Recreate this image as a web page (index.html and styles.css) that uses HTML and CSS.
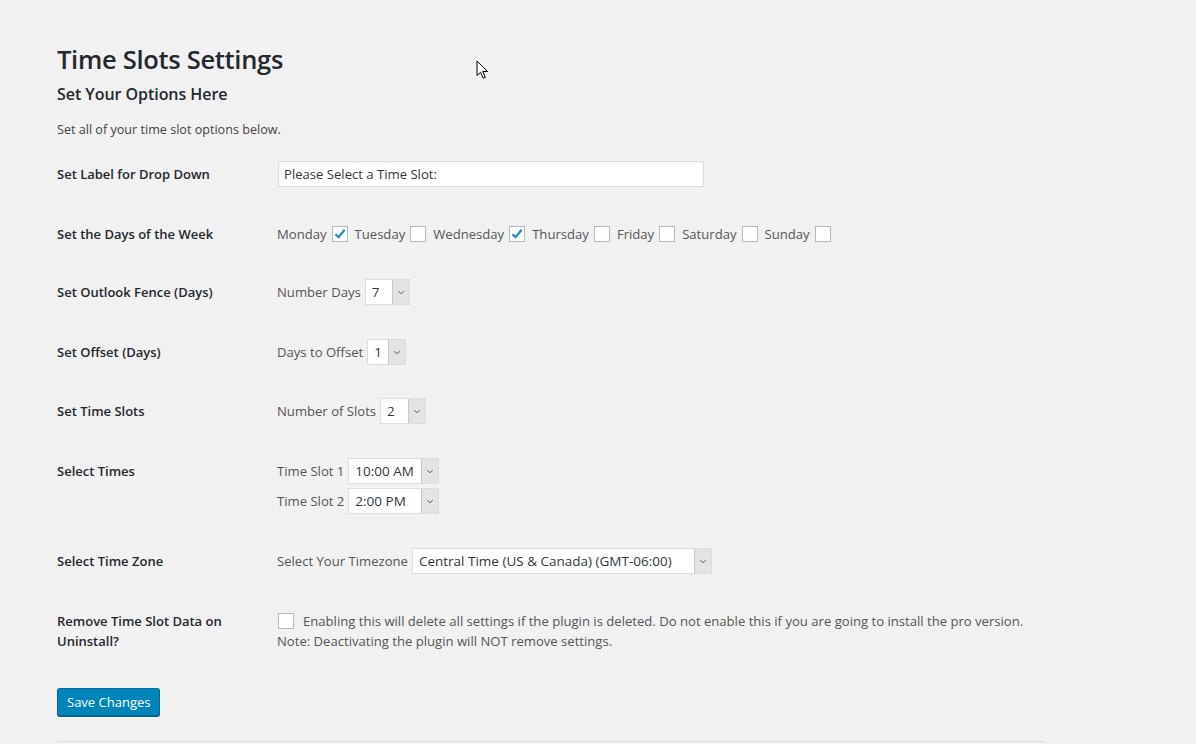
FILE: index.html
```html
<!DOCTYPE html>
<html>
<head>
<meta charset="utf-8">
<link rel="stylesheet" href="styles.css">
</head>
<body>
<div class="wrap">
  <h1 class="title">Time Slots Settings</h1>
  <h2 class="subtitle">Set Your Options Here</h2>
  <p class="intro">Set all of your time slot options below.</p>

  <div class="form">
    <div class="row r60">
      <div class="label">Set Label for Drop Down</div>
      <div class="field"><div class="text-input">Please Select a Time Slot:</div></div>
    </div>

    <div class="row r58">
      <div class="label">Set the Days of the Week</div>
      <div class="field days">
        <span class="day">Monday <span class="cb checked"><svg viewBox="0 0 16 16"><path d="M3.5 8.2 L6.6 11.2 L12.6 3.8" /></svg></span></span>
        <span class="day">Tuesday <span class="cb"></span></span>
        <span class="day">Wednesday <span class="cb checked"><svg viewBox="0 0 16 16"><path d="M3.5 8.2 L6.6 11.2 L12.6 3.8" /></svg></span></span>
        <span class="day">Thursday <span class="cb"></span></span>
        <span class="day">Friday <span class="cb"></span></span>
        <span class="day">Saturday <span class="cb"></span></span>
        <span class="day">Sunday <span class="cb"></span></span>
      </div>
    </div>

    <div class="row r60">
      <div class="label">Set Outlook Fence (Days)</div>
      <div class="field inline">Number Days
        <span class="select w45"><span class="val">7</span><span class="arrow"><svg viewBox="0 0 10 6"><path d="M1.5 1.5 L5 4.5 L8.5 1.5"/></svg></span></span>
      </div>
    </div>

    <div class="row r59">
      <div class="label">Set Offset (Days)</div>
      <div class="field inline">Days to Offset
        <span class="select w39"><span class="val">1</span><span class="arrow"><svg viewBox="0 0 10 6"><path d="M1.5 1.5 L5 4.5 L8.5 1.5"/></svg></span></span>
      </div>
    </div>

    <div class="row r60">
      <div class="label">Set Time Slots</div>
      <div class="field inline">Number of Slots
        <span class="select w46"><span class="val">2</span><span class="arrow"><svg viewBox="0 0 10 6"><path d="M1.5 1.5 L5 4.5 L8.5 1.5"/></svg></span></span>
      </div>
    </div>

    <div class="row r90">
      <div class="label">Select Times</div>
      <div class="field stack">
        <div class="inline">Time Slot 1
          <span class="select w91"><span class="val">10:00 AM</span><span class="arrow"><svg viewBox="0 0 10 6"><path d="M1.5 1.5 L5 4.5 L8.5 1.5"/></svg></span></span>
        </div>
        <div class="inline">Time Slot 2
          <span class="select w91"><span class="val">2:00 PM</span><span class="arrow"><svg viewBox="0 0 10 6"><path d="M1.5 1.5 L5 4.5 L8.5 1.5"/></svg></span></span>
        </div>
      </div>
    </div>

    <div class="row r60">
      <div class="label">Select Time Zone</div>
      <div class="field inline">Select Your Timezone
        <span class="select w301"><span class="val">Central Time (US &amp; Canada) (GMT-06:00)</span><span class="arrow"><svg viewBox="0 0 10 6"><path d="M1.5 1.5 L5 4.5 L8.5 1.5"/></svg></span></span>
      </div>
    </div>

    <div class="row r80">
      <div class="label">Remove Time Slot Data on Uninstall?</div>
      <div class="field para">
        <div class="line"><span class="cb left"></span>Enabling this will delete all settings if the plugin is deleted. Do not enable this if you are going to install the pro version.</div>
        <div class="line">Note: Deactivating the plugin will NOT remove settings.</div>
      </div>
    </div>
  </div>

  <div class="submit"><span class="button">Save Changes</span></div>
  <div class="rule"></div>
</div>

<svg class="cursor" viewBox="0 0 13 20" width="13" height="20"><path d="M1 1 L1 15.5 L4.6 12.3 L7.2 18.2 L9.3 17.3 L6.8 11.5 L11.6 11.5 Z" fill="#fff" stroke="#000" stroke-width="1" stroke-linejoin="miter"/></svg>
</body>
</html>
```

FILE: styles.css
```css
html, body {
  margin: 0;
  padding: 0;
  background: #f1f1f1;
}
body {
  font-family: "Open Sans", "Noto Sans", sans-serif;
  color: #444;
  font-size: 13px;
  width: 1196px;
  height: 744px;
  overflow: hidden;
  position: relative;
}
.wrap {
  padding: 40px 0 0 57px;
}
.title {
  margin: 0;
  font-size: 25.5px;
  font-weight: 600;
  line-height: 38px;
  color: #23282d;
  letter-spacing: -0.3px;
}
.subtitle {
  margin: 0;
  margin-top: 4px;
  font-size: 16px;
  font-weight: 600;
  line-height: 24px;
  color: #23282d;
  letter-spacing: -0.05px;
}
.intro {
  margin: 13px 0 0;
  font-size: 12.6px;
  line-height: 22px;
  color: #444;
}
.form {
  margin-top: 20px;
}
.row {
  display: grid;
  grid-template-columns: 220px 1fr;
  align-items: start;
}
.r58 { height: 58px; }
.r59 { height: 59px; }
.r60 { height: 60px; }
.r80 { height: 80px; }
.r90 { height: 90px; }
.label {
  padding-top: 3px;
  font-size: 13px;
  font-weight: 600;
  line-height: 20px;
  color: #23282d;
  width: 175px;
}
.field {
  font-size: 13.1px;
  color: #555;
}
.text-input {
  width: 414px;
  height: 24px;
  line-height: 24px;
  background: #fff;
  border: 1px solid #ddd;
  box-shadow: inset 0 1px 2px rgba(0,0,0,0.07);
  padding: 0 5px;
  margin-left: 1px;
  color: #32373c;
}
.days {
  display: flex;
  align-items: center;
  height: 26px;
}
.day {
  display: inline-flex;
  align-items: center;
  margin-right: 7px;
}
.cb {
  display: inline-block;
  width: 14px;
  height: 14px;
  border: 1px solid #b4b9be;
  background: #fff;
  margin-left: 5px;
  position: relative;
  flex: none;
}
.cb svg {
  width: 16px;
  height: 16px;
  position: absolute;
  left: -1px;
  top: -1px;
  fill: none;
  stroke: #1e8cbe;
  stroke-width: 2.2;
}
.cb.left {
  margin-left: 1px;
  margin-right: 9px;
  vertical-align: -3px;
}
.inline {
  display: flex;
  align-items: center;
  height: 26px;
}
.stack {
  display: flex;
  flex-direction: column;
  gap: 4px;
}
.select {
  display: inline-flex;
  height: 24px;
  border: 1px solid #ddd;
  background: #fff;
  margin-left: 4px;
  box-sizing: content-box;
}
.select .val {
  flex: 1;
  padding-left: 6px;
  line-height: 24px;
  color: #32373c;
  font-size: 13.5px;
  white-space: nowrap;
}
.select .arrow {
  width: 16px;
  background: #e3e3e3;
  border-left: 1px solid #c8c8c8;
  display: flex;
  align-items: center;
  justify-content: center;
}
.select .arrow svg {
  width: 8px;
  height: 5px;
  fill: none;
  stroke: #444;
  stroke-width: 1;
}
.w45 { width: 43px; }
.w39 { width: 37px; }
.w46 { width: 44px; }
.w91 { width: 89px; }
.w301 { width: 298px; }
.para .line {
  line-height: 20px;
  padding-top: 3px;
}
.para .line + .line {
  padding-top: 0;
}
.button {
  display: inline-block;
  height: 26px;
  line-height: 26px;
  padding: 0 9px;
  background: #0085ba;
  border: 1px solid #0073aa;
  border-color: #0073aa #006799 #006799;
  border-radius: 3px;
  box-shadow: 0 1px 0 #006799;
  color: #fff;
  font-size: 13px;
}
.rule {
  margin-top: 25px;
  width: 988px;
  height: 1px;
  background: #ddd;
}
.cursor {
  position: absolute;
  left: 476px;
  top: 60px;
}
```
